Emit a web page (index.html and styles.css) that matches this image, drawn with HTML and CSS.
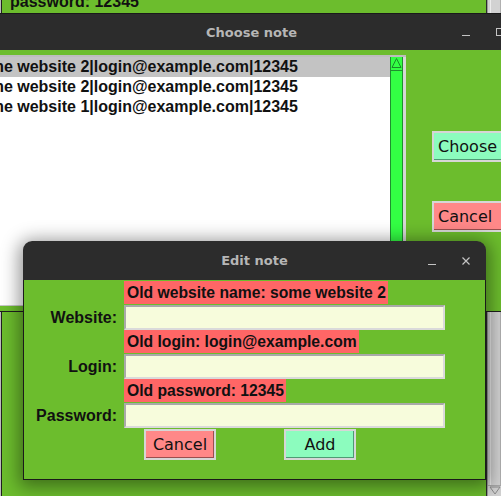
FILE: index.html
```html
<!DOCTYPE html>
<html>
<head>
<meta charset="utf-8">
<link rel="stylesheet" href="styles.css">
</head>
<body>
<div class="desk">
  <div class="edge-strip"></div>
  <div class="back-win">
    <div class="back-text">password: 12345</div>
  </div>
  <div class="back-scroll">
    <div class="back-scroll-track"></div>
    <div class="back-scroll-arrow">
      <svg width="12" height="9" viewBox="0 0 12 9"><polygon points="1,1 11,1 6,8" fill="none" stroke="#8a8a8a" stroke-width="1"/></svg>
    </div>
  </div>
</div>

<div class="win choose-win">
  <div class="titlebar">
    <div></div>
    <div class="title">Choose note</div>
    <div class="controls">
      <span class="ctl"><svg width="10" height="10" viewBox="0 0 10 10"><line x1="1" y1="8.5" x2="9" y2="8.5" stroke="#c4c4c4" stroke-width="1"/></svg></span>
      <span class="ctl"><svg width="10" height="10" viewBox="0 0 10 10"><rect x="1.5" y="1.5" width="7" height="7" fill="none" stroke="#c4c4c4" stroke-width="1"/></svg></span>
      <span class="ctl"><svg width="10" height="10" viewBox="0 0 10 10"><path d="M1.5 1.5 L8.5 8.5 M8.5 1.5 L1.5 8.5" stroke="#c4c4c4" stroke-width="1.2"/></svg></span>
    </div>
  </div>
  <div class="choose-body">
    <div class="listbox">
      <div class="rows">
        <div class="row selected">some website 2|login@example.com|12345</div>
        <div class="row">some website 2|login@example.com|12345</div>
        <div class="row">some website 1|login@example.com|12345</div>
      </div>
      <div class="vscroll">
        <div class="vscroll-arrow">
          <svg width="11" height="12" viewBox="0 0 11 12"><polygon points="5.5,1.5 10,10.5 1,10.5" fill="none" stroke="#1c8a2a" stroke-width="1"/></svg>
        </div>
      </div>
    </div>
    <div class="choose-buttons">
      <button class="btn btn-green">Choose</button>
      <button class="btn btn-red">Cancel</button>
    </div>
  </div>
</div>

<div class="win edit-win">
  <div class="titlebar edit-titlebar">
    <div></div>
    <div class="title">Edit note</div>
    <div class="controls">
      <span class="ctl"><svg width="10" height="10" viewBox="0 0 10 10"><line x1="1" y1="8.5" x2="9" y2="8.5" stroke="#c4c4c4" stroke-width="1"/></svg></span>
      <span class="ctl"><svg width="10" height="10" viewBox="0 0 10 10"><path d="M1.5 1.5 L8.5 8.5 M8.5 1.5 L1.5 8.5" stroke="#c4c4c4" stroke-width="1.2"/></svg></span>
    </div>
  </div>
  <div class="edit-body">
    <div class="form">
      <div></div>
      <div class="old">Old website name: some website 2</div>
      <div class="lbl">Website:</div>
      <div class="entry"></div>
      <div></div>
      <div class="old">Old login: login@example.com</div>
      <div class="lbl">Login:</div>
      <div class="entry"></div>
      <div></div>
      <div class="old">Old password: 12345</div>
      <div class="lbl">Password:</div>
      <div class="entry"></div>
      <div></div>
      <div class="form-buttons">
        <button class="btn btn-red">Cancel</button>
        <button class="btn btn-green">Add</button>
      </div>
    </div>
  </div>
</div>
</body>
</html>
```

FILE: styles.css
```css
html, body {
  margin: 0;
  padding: 0;
}
body {
  width: 501px;
  height: 496px;
  overflow: hidden;
  position: relative;
  background: #6cbd2d;
  font-family: "Liberation Sans", Arial, sans-serif;
}

/* background desktop window */
.desk {
  display: flex;
  width: 501px;
  height: 496px;
}
.edge-strip {
  width: 1px;
  background: #bdbdbd;
  border-right: 1px solid #202020;
}
.back-win {
  flex: 1;
  background: #6cbd2d;
  border-right: 1px solid #2a2a2a;
}
.back-text {
  font-weight: bold;
  font-size: 16px;
  line-height: 18px;
  margin-top: -7px;
  padding-left: 8px;
  color: #111;
}
.back-scroll {
  width: 13px;
  display: flex;
  flex-direction: column;
  background: #d2d2d2;
  border-left: 1px solid #9a9a9a;
}
.back-scroll-track {
  flex: 1;
  margin-left: 2px;
  border-left: 1px solid #ececec;
  border-right: 1px solid #b0b0b0;
}
.back-scroll-arrow {
  height: 10px;
  display: flex;
  justify-content: center;
  align-items: flex-start;
  border-top: 1px solid #a8a8a8;
}

/* windows */
.win {
  position: absolute;
}
.titlebar {
  display: grid;
  grid-template-columns: 1fr auto 1fr;
  align-items: center;
  background: #2c2c2c;
  color: #b6b6b6;
}
.title {
  font-family: "DejaVu Sans", sans-serif;
  font-weight: bold;
  font-size: 13px;
}
.controls {
  display: flex;
  justify-content: flex-end;
}
.ctl {
  width: 34px;
  display: flex;
  justify-content: center;
  align-items: center;
}

/* Choose note window */
.choose-win {
  left: -50px;
  top: 13px;
  width: 603px;
  height: 298px;
  display: flex;
  flex-direction: column;
  background: #6cbd2d;
  border-bottom: 1px solid #1e1e1e;
}
.choose-win .titlebar {
  height: 36px;
  border-top: 1px solid #1a1a1a;
}
.choose-win .controls {
  padding-right: 2px;
}
.choose-body {
  flex: 1;
  display: flex;
  align-items: flex-start;
}
.listbox {
  margin-left: 10px;
  margin-top: 5px;
  width: 446px;
  height: 248px;
  display: flex;
  border-top: 2px solid #bdbdbd;
  border-bottom: 1px solid #c8c8c8;
  background: #fff;
}
.rows {
  flex: 1;
  background: #fff;
}
.row {
  height: 20px;
  line-height: 20px;
  padding-left: 11px;
  font-weight: bold;
  font-size: 16px;
  color: #111;
  white-space: nowrap;
}
.row.selected {
  background: #c3c3c3;
}
.vscroll {
  width: 11px;
  background: #33ff44;
  border-left: 1px solid #1f8f2f;
  border-right: 1px solid #1f8f2f;
  margin-right: 3px;
  box-shadow: 3px 0 0 #d6d6d6;
}
.vscroll-arrow {
  height: 13px;
  display: flex;
  justify-content: center;
  border-bottom: 1px solid #1f8f2f;
}
.choose-buttons {
  margin-left: 26px;
  padding-top: 81px;
  display: flex;
  flex-direction: column;
  gap: 39px;
}
.choose-buttons .btn {
  width: 82px;
  text-align: left;
  padding-left: 4px;
}

/* buttons */
.btn {
  box-sizing: border-box;
  height: 31px;
  width: 72px;
  font-family: "DejaVu Sans", sans-serif;
  font-size: 16px;
  color: #111;
  border: 2px solid #d6d6d6;
  padding: 0;
  margin: 0;
}
.btn-red {
  background: #ff8888;
  box-shadow: inset -1px -1px 0 #9a4f4f;
}
.btn-green {
  background: #8cfcbe;
  box-shadow: inset -1px -1px 0 #4f9a74;
}

/* Edit note dialog */
.edit-win {
  left: 23px;
  top: 241px;
  width: 463px;
  height: 239px;
  display: flex;
  flex-direction: column;
  border-radius: 9px 9px 0 0;
  box-shadow: 0 3px 18px 4px rgba(0, 0, 0, 0.42);
}
.edit-titlebar {
  height: 39px;
  border-radius: 9px 9px 0 0;
}
.edit-titlebar .controls {
  padding-right: 3px;
}
.edit-body {
  flex: 1;
  background: #6cbd2d;
  border: 1px solid #1a1a1a;
  border-top: none;
}
.form {
  display: grid;
  grid-template-columns: 95px 321px;
  column-gap: 5px;
  padding-top: 1px;
  align-items: center;
}
.old {
  justify-self: start;
  background: #ff6666;
  font-weight: bold;
  font-size: 15.7px;
  height: 23px;
  line-height: 23px;
  padding: 0 2px 0 3px;
  color: #111;
  margin-bottom: 1px;
}
.lbl {
  text-align: right;
  padding-right: 2px;
  font-weight: bold;
  font-size: 16px;
  color: #111;
}
.entry {
  box-sizing: border-box;
  height: 25px;
  background: #f7fcdc;
  border: 2px solid;
  border-color: #a9a9a9 #dadada #dadada #a9a9a9;
}
.form-buttons {
  display: flex;
  gap: 68px;
  margin-left: 20px;
  margin-top: 1px;
}
```
